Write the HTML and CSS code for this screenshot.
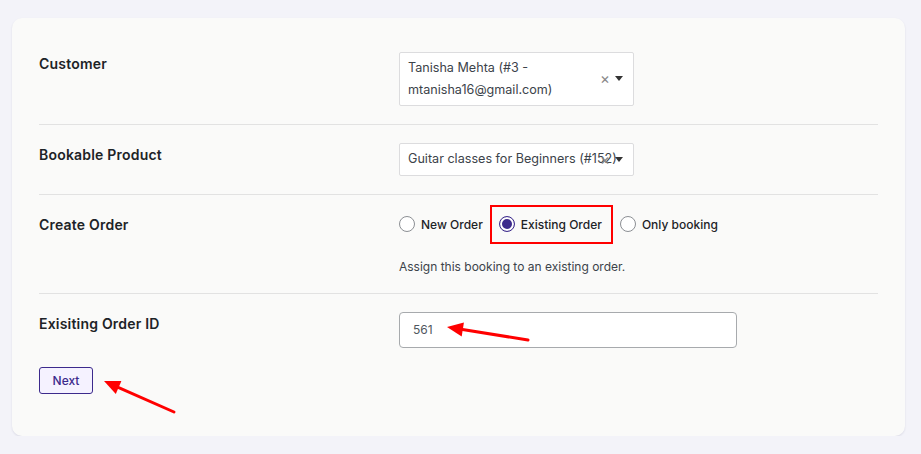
FILE: index.html
```html
<!DOCTYPE html>
<html lang="en">
<head>
    <meta charset="UTF-8">
    <title>Add Booking</title>
    <link rel="stylesheet" href="styles.css">
</head>
<body>

<div class="card">
    <div class="row">
        <div class="label">Customer</div>
        <div class="field">
            <div class="select select-tall">
                <span class="select-text">Tanisha Mehta (#3 - mtanisha16@gmail.com)</span>
                <span class="select-clear">×</span>
                <span class="select-arrow"></span>
            </div>
        </div>
    </div>

    <div class="row">
        <div class="label">Bookable Product</div>
        <div class="field">
            <div class="select">
                <span class="select-text nowrap">Guitar classes for Beginners (#152)</span>
                <span class="select-clear">×</span>
                <span class="select-arrow"></span>
            </div>
        </div>
    </div>

    <div class="row">
        <div class="label">Create Order</div>
        <div class="field">
            <div class="radios">
                <label class="radio"><span class="dot"></span>New Order</label>
                <label class="radio marked"><span class="dot checked"></span>Existing Order</label>
                <label class="radio"><span class="dot"></span>Only booking</label>
            </div>
            <p class="hint">Assign this booking to an existing order.</p>
        </div>
    </div>

    <div class="row last">
        <div class="label">Exisiting Order ID</div>
        <div class="field">
            <div class="input">561</div>
        </div>
    </div>

    <button class="btn-next">Next</button>
</div>

<!-- стрелки-пометки поверх формы -->
<svg class="marks" width="921" height="454" viewBox="0 0 921 454">
    <line x1="528" y1="340" x2="461" y2="329.3" stroke="#f00" stroke-width="3" stroke-linecap="round"/>
    <polygon points="447,327 463.9,322.6 461.7,336.4" fill="#f00"/>
    <line x1="174" y1="412" x2="117" y2="386.8" stroke="#f00" stroke-width="3" stroke-linecap="round"/>
    <polygon points="104,381 121.4,381.1 115.8,393.9" fill="#f00"/>
</svg>

</body>
</html>
```

FILE: styles.css
```css
* {
    box-sizing: border-box;
}
body {
    margin: 0;
    background-color: #f3f3f9;
    font-family: Inter, "Noto Sans", sans-serif;
    color: #1d2327;
}
.card {
    margin: 18px 16px 0 12px;
    width: 893px;
    height: 418px;
    background-color: #fafaf9;
    border-radius: 10px;
    box-shadow: 0 1px 2px rgba(40, 40, 90, 0.12);
    padding: 16px 27px 0 27px;
}
.row {
    display: flex;
    padding: 18px 0;
    border-bottom: 1px solid #e2e2e2;
}
.row.last {
    border-bottom: none;
    padding-bottom: 19px;
}
.label {
    width: 360px;
    flex-shrink: 0;
    font-size: 14px;
    font-weight: 600;
    line-height: 24px;
    letter-spacing: 0.2px;
}
.field {
    flex: 1;
}

/* выпадающие списки */
.select {
    position: relative;
    width: 235px;
    height: 33px;
    background-color: #fff;
    border: 1px solid #dcdcde;
    border-radius: 2px;
    padding: 4px 36px 4px 8px;
    font-size: 12.6px;
    line-height: 22px;
    color: #3c434a;
}
.select-tall {
    height: 54px;
}
.nowrap {
    white-space: nowrap;
}
.select-clear {
    position: absolute;
    right: 23px;
    top: 50%;
    transform: translateY(-52%);
    font-size: 15px;
    color: #888;
    line-height: 1;
}
.select-arrow {
    position: absolute;
    right: 10px;
    top: 50%;
    margin-top: -3px;
    border-top: 5px solid #333;
    border-left: 4px solid transparent;
    border-right: 4px solid transparent;
}

/* радио-кнопки */
.radios {
    display: flex;
    align-items: center;
    height: 22px;
}
.radio {
    display: inline-flex;
    align-items: center;
    gap: 6px;
    font-size: 12px;
    font-weight: 500;
    margin-right: 7px;
}
.radio.marked {
    border: 2px solid #f00;
    height: 39px;
    margin: 0 7px 0 0;
    padding: 0 9px 0 7px;
}
.dot {
    width: 16px;
    height: 16px;
    border: 1px solid #8c8f94;
    border-radius: 50%;
    background-color: #fff;
}
.dot.checked {
    border-color: #3c2a8c;
    box-shadow: inset 0 0 0 2px #fff, inset 0 0 0 8px #3c2a8c;
}
.hint {
    margin: 24px 0 0;
    font-size: 12px;
    line-height: 16px;
    color: #3c434a;
}

/* поле ввода */
.input {
    width: 338px;
    height: 36px;
    background-color: #fff;
    border: 1px solid #a7aaad;
    border-radius: 4px;
    padding: 0 13px;
    font-size: 12px;
    line-height: 34px;
    color: #50575e;
}

.btn-next {
    display: block;
    width: 54px;
    height: 27px;
    background-color: #f5f2ff;
    border: 1px solid #3c2a8c;
    border-radius: 3px;
    font-family: Inter, "Noto Sans", sans-serif;
    font-size: 12px;
    font-weight: 500;
    color: #3c2a8c;
    padding: 0;
}

.marks {
    position: absolute;
    left: 0;
    top: 0;
    pointer-events: none;
}
```
